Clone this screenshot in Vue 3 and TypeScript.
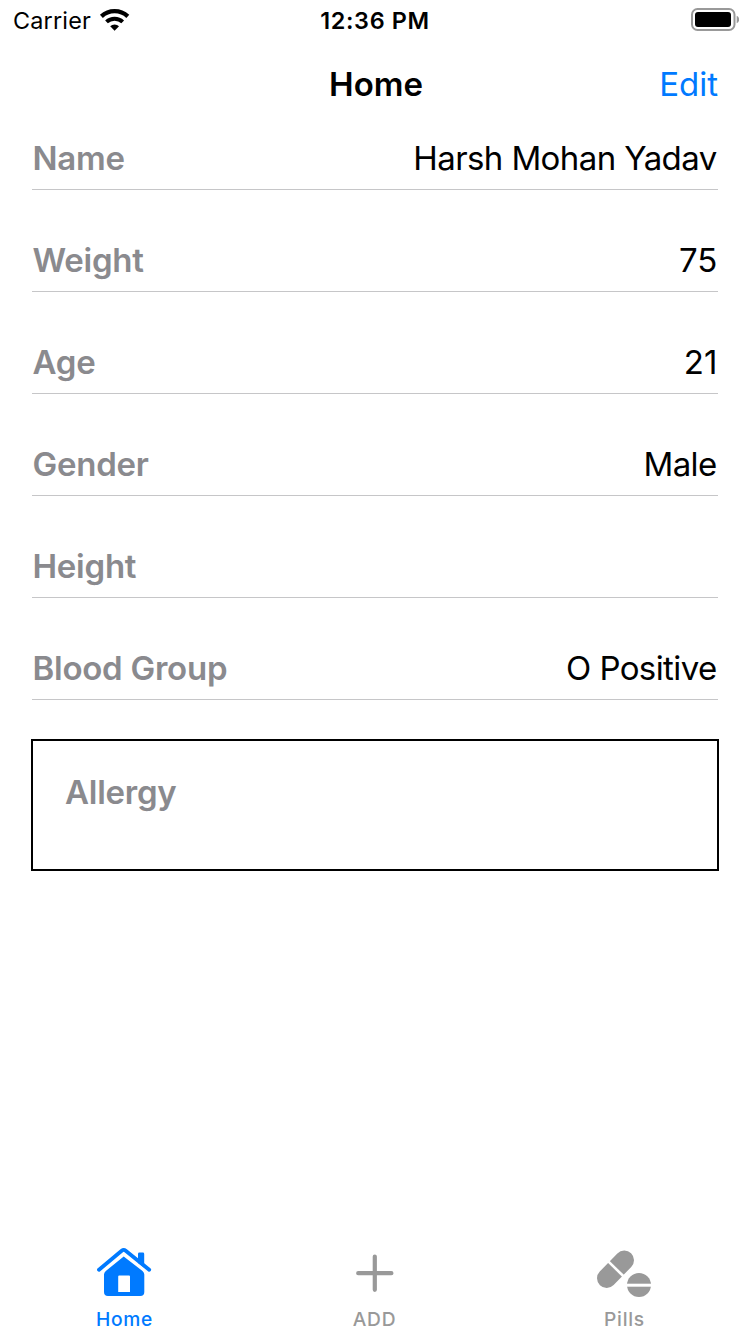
<script setup lang="ts">
interface Field {
  label: string
  value: string
}

const fields: Field[] = [
  { label: 'Name', value: 'Harsh Mohan Yadav' },
  { label: 'Weight', value: '75' },
  { label: 'Age', value: '21' },
  { label: 'Gender', value: 'Male' },
  { label: 'Height', value: '' },
  { label: 'Blood Group', value: 'O Positive' },
]

const isNumeric = (value: string): boolean => /^\d+$/.test(value)
</script>

<template>
  <main class="screen">
    <header class="status">
      <div class="carrier">
        <span>Carrier</span>
        <svg width="31" height="24" viewBox="0 0 31 24">
          <path fill="none" stroke="#000" stroke-width="4.3" d="M2.4 8.4A19.4 19.4 0 0 1 28.8 8.4" />
          <path fill="none" stroke="#000" stroke-width="4" d="M7.5 13.9A11.9 11.9 0 0 1 23.7 13.9" />
          <path d="M11.2 18.2A6.3 6.3 0 0 1 20 18.2L15.6 22.8Z" />
        </svg>
      </div>
      <span class="time">12:36 PM</span>
      <svg class="battery" width="48" height="24" viewBox="0 0 48 24">
        <rect x="1" y="1" width="42.5" height="21" rx="5.5" fill="none" stroke="#999" stroke-width="2" />
        <rect x="4" y="4" width="36" height="15" rx="3" />
        <path fill="#999" d="M45.7 7.7Q48.2 9 48.2 11.5T45.7 15.3Z" />
      </svg>
    </header>

    <nav class="nav">
      <h1>Home</h1>
      <a>Edit</a>
    </nav>

    <section class="fields">
      <div v-for="f in fields" :key="f.label" class="row">
        <span class="label">{{ f.label }}</span>
        <span class="value" :class="{ numeric: isNumeric(f.value) }">{{ f.value }}</span>
      </div>
    </section>

    <section class="allergy"><span class="label">Allergy</span></section>

    <footer class="tabs">
      <div class="tab active">
        <svg width="56" height="52" viewBox="1 0 56 52">
          <path fill="currentColor" d="M42 17V8Q42 6.6 43.4 6.6H46.8Q48.2 6.6 48.2 8V21.5Z" />
          <path fill="none" stroke="currentColor" stroke-width="3.8" stroke-linecap="round" stroke-linejoin="round" d="M3 23.8L25.7 4.7Q27.7 3.1 29.7 4.7L53.2 23.8" />
          <path fill="currentColor" fill-rule="evenodd" d="M27.7 10.4L46.5 25Q48.3 26.5 48.3 28.5V46Q48.3 50 44.3 50H12Q8 50 8 46V28.5Q8 26.5 9.8 25ZM23.2 29.4Q22.2 29.4 22.2 30.4V46H34V30.4Q34 29.4 33 29.4Z" />
        </svg>
        <span>Home</span>
      </div>
      <div class="tab">
        <svg width="56" height="52" viewBox="0 0 56 52">
          <path fill="none" stroke="currentColor" stroke-width="4.2" stroke-linecap="round" d="M11.2 27.2H44.4M27.8 10.6V43.8" />
        </svg>
        <span>ADD</span>
      </div>
      <div class="tab">
        <svg width="56" height="52" viewBox="0 0 56 52">
          <path fill="none" stroke="currentColor" stroke-width="19.4" stroke-linecap="round" d="M9.7 32.2L27.3 14.2" />
          <path stroke="#fff" stroke-width="2.6" d="M10.5 14.6L27.5 31.3" />
          <circle cx="42" cy="39" r="12" fill="currentColor" />
          <path stroke="#fff" stroke-width="3" d="M29 39.2H55" />
        </svg>
        <span>Pills</span>
      </div>
    </footer>
  </main>
</template>

<style>
body { margin: 0; background: #fff; }
</style>

<style scoped>
.screen { width: 750px; height: 1334px; background: #fff; color: #000; font-family: Inter, sans-serif; display: flex; flex-direction: column; }
.status { height: 40px; display: grid; grid-template-columns: 1fr auto 1fr; align-items: center; padding: 0 11px 0 13px; font-size: 23.4px; }
.carrier { display: flex; align-items: center; gap: 8px; letter-spacing: 0.2px; white-space: nowrap; }
.time { font-weight: 600; letter-spacing: 0.65px; margin-left: -2px; }
.battery { justify-self: end; }
.nav { height: 87px; display: grid; grid-template-columns: 1fr auto 1fr; align-items: center; padding: 0 32px; }
h1 { grid-column: 2; margin: 0 0 0 2px; font-size: 33px; font-weight: 600; }
.nav a { justify-self: end; color: #007aff; font-size: 33px; }
.fields { padding: 0 32px; }
.row { box-sizing: border-box; height: 63px; margin-bottom: 39px; border-bottom: 1px solid #c6c6c8; display: flex; justify-content: space-between; align-items: center; font-size: 33px; padding: 0 1px 0 0.5px; }
.label { color: #8a8a8e; font-weight: 600; font-size: 33px; letter-spacing: -0.25px; }
.value { letter-spacing: -0.6px; margin-right: 0.4px; }
.numeric { letter-spacing: 0; margin-right: -0.4px; }
.allergy { margin: 0 31px; height: 132px; box-sizing: border-box; border: 2px solid #000; padding: 31px 32px; }
.tabs { margin-top: auto; height: 88px; display: grid; grid-template-columns: repeat(3, 1fr); }
.tab { display: flex; flex-direction: column; align-items: center; gap: 9px; color: #999; font-size: 19.2px; line-height: 24px; font-weight: 450; letter-spacing: 0.75px; }
.tab span { margin-right: 1px; }
.tab svg { flex: none; }
.active { color: #007aff; }
</style>
